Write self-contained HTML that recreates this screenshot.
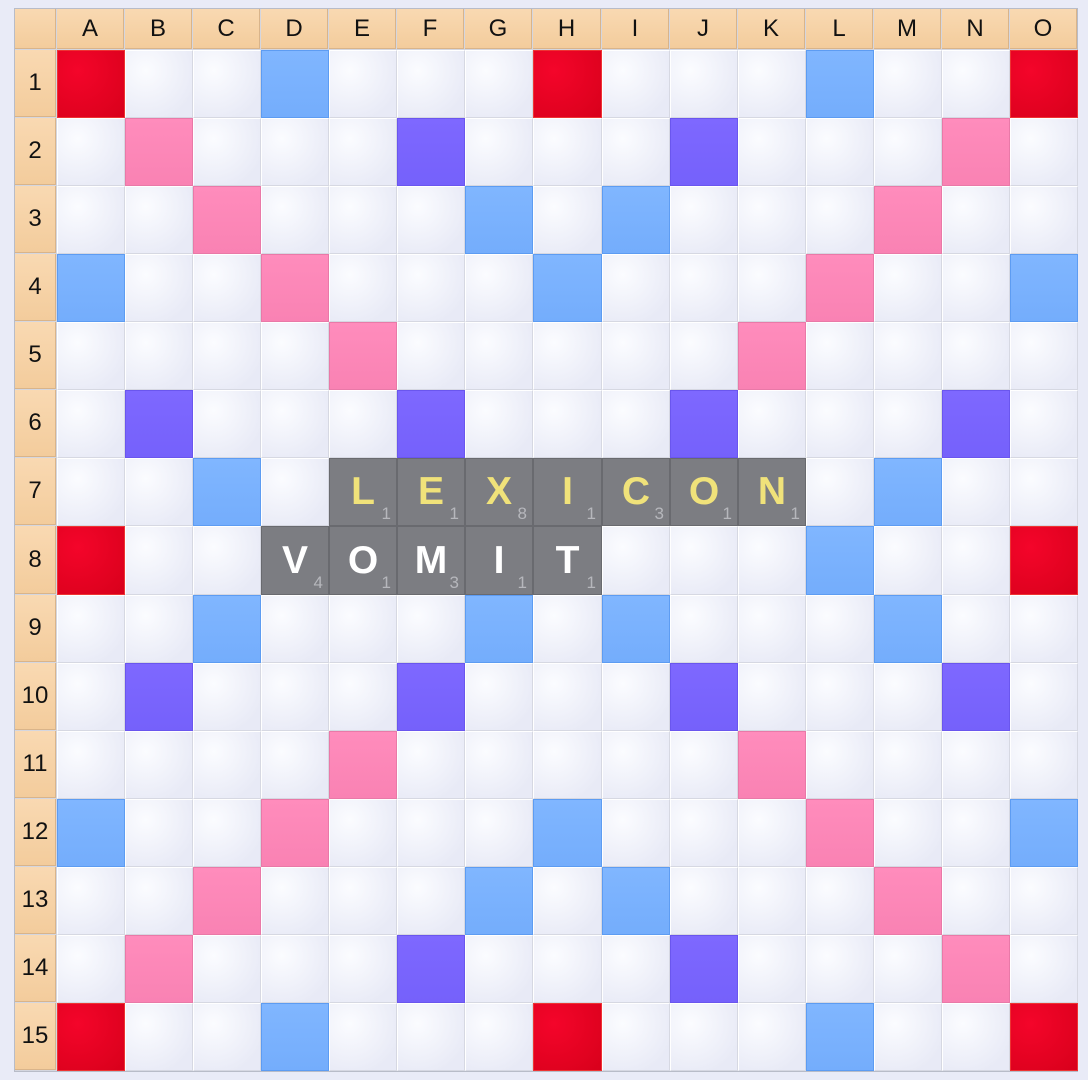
<!DOCTYPE html>
<html><head><meta charset="utf-8"><style>
html,body{margin:0;padding:0;background:#e9ebf7;width:1088px;height:1080px;overflow:hidden}
#b{position:absolute;left:14px;top:8px;width:1064px;height:1064px;background:#d4d6df;border:1px solid #b8bcc8;box-sizing:border-box}
.c{position:absolute;box-sizing:border-box;font-family:"Liberation Sans",sans-serif}
.h{background:linear-gradient(#f9d9b2,#f3cc9c);border-right:1px solid #d9b48a;border-bottom:1px solid #d9b48a;display:flex;align-items:center;justify-content:center;font-size:24px;color:#111}
.n{background:radial-gradient(circle at 30% 30%,#fbfcff,#e8eaf6 80%);border:1px solid #fff;border-right-color:#d6d8e2;border-bottom-color:#d6d8e2}
.r{background:radial-gradient(circle at 30% 30%,#f4052a,#d8001b);border:1px solid #e33}
.bl{background:linear-gradient(#80b6ff,#74adfc);border:1px solid #5d9cf2}
.p{background:linear-gradient(#ff8cbc,#f982b3);border:1px solid #e979a8}
.v{background:linear-gradient(#7e68ff,#7561fb);border:1px solid #6a56ee}
.t{background:#7c7d82;border:1px solid #696a6f;display:flex;align-items:center;justify-content:center;font-size:39px;font-weight:bold}
.t span{position:absolute;right:5px;bottom:1px;font-size:17px;font-weight:normal;color:#b6b7bc}
</style></head><body><div id="b"></div>
<script>
var b=document.getElementById('b');
var L='ABCDEFGHIJKLMNO';
function el(cls,x,y,w,h,html){var d=document.createElement('div');d.className='c '+cls;d.style.left=x+'px';d.style.top=y+'px';d.style.width=w+'px';d.style.height=h+'px';if(html)d.innerHTML=html;b.appendChild(d);return d;}
var X0=42,Y0=41,P=68.07;
el('h',0,0,41,40,'');
for(var i=0;i<15;i++){el('h',Math.round(X0+i*P),0,Math.round(X0+(i+1)*P)-Math.round(X0+i*P)-1,40,L[i]);el('h',0,Math.round(Y0+i*P),41,Math.round(Y0+(i+1)*P)-Math.round(Y0+i*P)-1,String(i+1));}
var map={};
function s(list,c){list.split(' ').forEach(function(k){map[k]=c});}
s('A1 H1 O1 A8 O8 A15 H15 O15','r');
s('D1 L1 G3 I3 A4 H4 O4 C7 G7 I7 M7 D8 L8 C9 G9 I9 M9 A12 H12 O12 G13 I13 D15 L15','bl');
s('B2 N2 C3 M3 D4 L4 E5 K5 E11 K11 D12 L12 C13 M13 B14 N14 H8','p');
s('F2 J2 B6 F6 J6 N6 B10 F10 J10 N10 F14 J14','v');
var tiles={};
'LEXICON'.split('').forEach(function(ch,i){tiles[L[4+i]+'7']=[ch,[1,1,8,1,3,1,1][i],'#f0e27a']});
'VOMIT'.split('').forEach(function(ch,i){tiles[L[3+i]+'8']=[ch,[4,1,3,1,1][i],'#fff']});
for(var r=0;r<15;r++)for(var c=0;c<15;c++){
 var k=L[c]+(r+1),x=Math.round(X0+c*P),y=Math.round(Y0+r*P),w=Math.round(X0+(c+1)*P)-x,h=Math.round(Y0+(r+1)*P)-y;
 if(tiles[k]){var t=tiles[k];var d=el('t',x,y,w,h,t[0]+'<span>'+t[1]+'</span>');d.style.color=t[2];}
 else el(map[k]||'n',x,y,w,h,'');
}
</script></body></html>
